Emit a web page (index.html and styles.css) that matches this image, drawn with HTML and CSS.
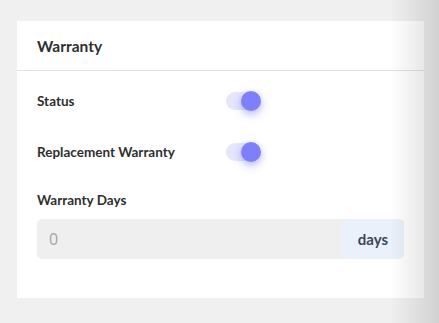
FILE: index.html
```html
<!DOCTYPE html>
<html>
<head>
<meta charset="utf-8">
<link rel="stylesheet" href="styles.css">
</head>
<body>
<div class="card">
  <div class="card-header">Warranty</div>
  <div class="card-body">
    <div class="row">
      <span class="label">Status</span>
      <span class="toggle"><span class="thumb"></span></span>
    </div>
    <div class="row row-second">
      <span class="label">Replacement Warranty</span>
      <span class="toggle"><span class="thumb"></span></span>
    </div>
    <div class="field-label">Warranty Days</div>
    <div class="input-group">
      <input class="input" type="text" placeholder="0">
      <span class="suffix">days</span>
    </div>
  </div>
</div>
<div class="edge-shade"></div>
</body>
</html>
```
FILE: styles.css
```css
html, body {
  margin: 0;
  padding: 0;
}
body {
  background: #f0f0f0;
  width: 439px;
  height: 323px;
  overflow: hidden;
  position: relative;
  font-family: Lato, "Open Sans", sans-serif;
  color: #333;
  padding-top: 21px;
  box-sizing: border-box;
}
.card {
  margin-left: 17px;
  width: 407px;
  height: 277px;
  background: #fff;
  box-sizing: border-box;
}
.card-header {
  height: 49px;
  border-bottom: 1px solid #e1e0e8;
  padding-left: 20px;
  display: flex;
  align-items: center;
  font-size: 15.5px;
  font-weight: 700;
  color: #2f2f2f;
}
.card-body {
  padding: 20px 20px 0 20px;
}
.row {
  display: grid;
  grid-template-columns: 189px auto;
  align-items: center;
  height: 20px;
}
.row-second {
  margin-top: 31px;
}
.label, .field-label {
  font-size: 13.5px;
  font-weight: 700;
  color: #2f2f2f;
}
.toggle {
  position: relative;
  width: 34px;
  height: 18px;
  border-radius: 9px;
  background: #e6e6fb;
  display: block;
}
.thumb {
  position: absolute;
  left: 15px;
  top: -1px;
  width: 20px;
  height: 20px;
  border-radius: 50%;
  background: #7f7ffc;
  box-shadow: 0 3px 8px rgba(110, 110, 255, 0.55);
}
.field-label {
  margin-top: 30px;
  line-height: 16px;
}
.input-group {
  margin-top: 11px;
  display: flex;
  height: 40px;
  width: 367px;
}
.input {
  flex: 1;
  min-width: 0;
  border: none;
  outline: none;
  background: #efefef;
  border-radius: 5px 0 0 5px;
  padding: 0 0 0 12px;
  font-family: "Open Sans", sans-serif;
  font-size: 16px;
  color: #333;
}
.input::placeholder {
  color: #a3a3a3;
}
.suffix {
  width: 62px;
  background: #eaf1fb;
  border-radius: 0 5px 5px 0;
  display: flex;
  align-items: center;
  justify-content: center;
  font-size: 15px;
  font-weight: 700;
  color: #3b4756;
}
.edge-shade {
  position: absolute;
  top: 0;
  right: 0;
  width: 49px;
  height: 100%;
  background: linear-gradient(to right, rgba(0,0,0,0), rgba(0,0,0,0.13));
  pointer-events: none;
}
```
